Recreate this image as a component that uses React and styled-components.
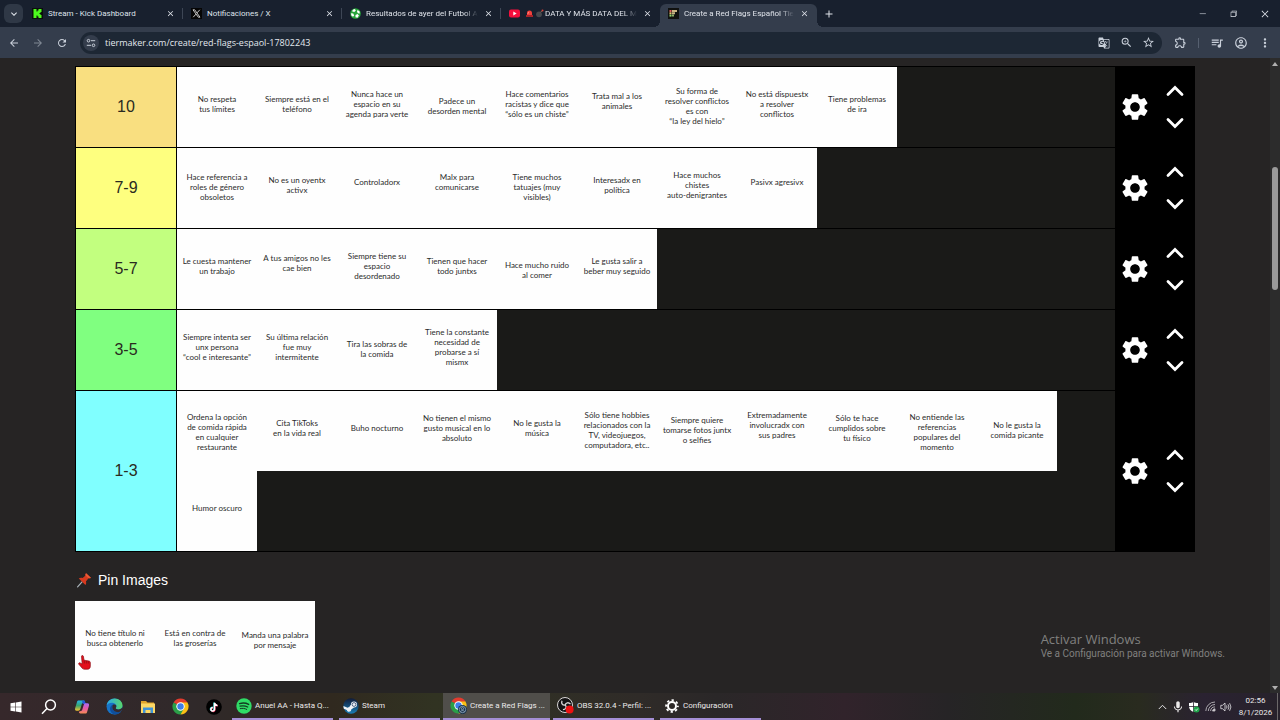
import styled, { createGlobalStyle, css } from "styled-components";
import {
  MdSettings,
  MdKeyboardArrowDown,
  MdArrowBack,
  MdArrowForward,
  MdRefresh,
  MdClose,
  MdAdd,
  MdGTranslate,
  MdZoomIn,
  MdStarBorder,
  MdOutlineExtension,
  MdQueueMusic,
  MdOutlineAccountCircle,
  MdMoreVert,
  MdMic,
} from "react-icons/md";
import { VscChromeMinimize, VscChromeRestore, VscChromeClose } from "react-icons/vsc";

const GlobalStyle = createGlobalStyle`
  * {
    box-sizing: border-box;
  }
  body {
    margin: 0;
    background: #262424;
  }
  button {
    display: flex;
    align-items: center;
    justify-content: center;
    padding: 0;
    border: 0;
    background: none;
    color: inherit;
    font: inherit;
  }
  svg {
    display: block;
    flex-shrink: 0;
  }
`;

const Screen = styled.div`
  display: flex;
  flex-direction: column;
  height: 100vh;
  color: #dfe3ea;
  font-family: Roboto, "Open Sans", sans-serif;
  font-size: 8px;
`;

/* browser window */

const TabStrip = styled.header`
  display: flex;
  height: 27px;
  flex-shrink: 0;
  background: #18202e;
`;

const TabSearch = styled.button`
  width: 19px;
  height: 19px;
  margin: 4px 1px 0 4px;
  border-radius: 6px;
  background: #2f3846 !important;
`;

const Tab = styled.div`
  position: relative;
  display: flex;
  align-items: center;
  gap: 5px;
  flex: 0 1 159px;
  min-width: 0;
  height: 19px;
  margin-top: 4px;
  padding: 0 8px;

  ${(props) =>
    props.$divider &&
    css`
      &::after {
        content: "";
        position: absolute;
        right: 0;
        width: 1px;
        height: 11px;
        background: #3d4655;
      }
    `}

  ${(props) =>
    props.$active &&
    css`
      flex-basis: 157px;
      height: 23px;
      padding-bottom: 4px;
      border-radius: 6px 6px 0 0;
      background: #343d4c;

      &::before,
      &::after {
        content: "";
        position: absolute;
        bottom: 0;
        width: 6px;
        height: 6px;
      }
      &::before {
        right: 100%;
        background: radial-gradient(circle at 0 0, transparent 6px, #343d4c 6px);
      }
      &::after {
        left: 100%;
        background: radial-gradient(circle at 100% 0, transparent 6px, #343d4c 6px);
      }
    `}
`;

const TabTitle = styled.span`
  display: flex;
  align-items: center;
  gap: 1px;
  flex: 1;
  min-width: 0;
  white-space: nowrap;
  line-height: 12px;
  mask-image: ${(props) => (props.$fade ? "linear-gradient(to right, #000 88%, transparent)" : "none")};
`;

const TabClose = styled.button`
  width: 10px;
  height: 10px;
`;

const NewTab = styled.button`
  width: 24px;
  height: 19px;
  margin-top: 4px;
`;

const WindowControls = styled.div`
  display: flex;
  margin-left: auto;

  button {
    width: 31px;
    height: 27px;
  }
`;

const Toolbar = styled.nav`
  display: flex;
  align-items: center;
  height: 31px;
  flex-shrink: 0;
  padding: 0 3px 0 2px;
  background: #343d4c;
  color: #c9d0da;
`;

const ToolButton = styled.button`
  width: 24px;
  height: 22px;
  opacity: ${(props) => (props.$dim ? 0.5 : 1)};
`;

const AddressBar = styled.div`
  display: flex;
  align-items: center;
  flex: 1;
  height: 22px;
  margin: 0 6px;
  padding: 0 3px;
  border-radius: 11px;
  background: #1d2734;

  button {
    width: 22px;
    height: 16px;
  }
`;

const SiteInfo = styled.button`
  border-radius: 8px;
  background: #343d4c !important;
  width: 16px !important;
`;

const Address = styled.input`
  flex: 1;
  min-width: 0;
  padding: 0 0 0 6px;
  border: 0;
  background: none;
  color: #e3e7ee;
  font: 9px/16px "Open Sans", "Noto Sans", sans-serif;
`;

const Divider = styled.span`
  width: 1px;
  height: 10px;
  margin: 0 6px;
  background: #566070;
`;

/* tier list page */

const Viewport = styled.div`
  position: relative;
  display: flex;
  flex: 1;
  min-height: 0;
  overflow: hidden;
  background: #262424;
`;

const Page = styled.main`
  flex: 1;
  min-width: 0;
  padding: 8px 75px 0;
`;

const TierList = styled.div`
  border: solid #000;
  border-width: 1px 0 0 1px;
  background: #000;
`;

const TierRow = styled.section`
  display: grid;
  grid-template-columns: 101px 1fr 80px;
  border-bottom: 1px solid #000;
`;

const TierLabel = styled.h2`
  display: flex;
  align-items: center;
  justify-content: center;
  margin: 0;
  border-right: 1px solid #000;
  background: ${(props) => props.$color};
  color: #2a2a20;
  font: 16px/20px "Liberation Sans", Arial, sans-serif;
`;

const TierItems = styled.ul`
  display: flex;
  flex-wrap: wrap;
  align-content: flex-start;
  margin: 0;
  padding: 0;
  background: #1a1a18;
  list-style: none;
`;

const cardPadding = {
  high: "0 0 12px",
  normal: "0 0 7px",
  middle: "0 0 2px",
  low: "2px 0 0",
};

const Card = styled.li`
  display: flex;
  align-items: center;
  justify-content: center;
  width: 80px;
  height: 80px;
  padding: ${(props) => cardPadding[props.$place || "normal"]};
  background: #fefefe;
  color: #2b2b2b;
  font: 8px/10px Lato, sans-serif;
  text-align: center;
  white-space: pre;
`;

const TierControls = styled.div`
  display: grid;
  grid-template-columns: 1fr 1fr;
  align-items: center;
  background: #000;
  color: #fff;
`;

const MoveButtons = styled.div`
  display: flex;
  flex-direction: column;
  align-items: center;

  button {
    width: 32px;
    height: 32px;
  }
`;

const PinTitle = styled.h3`
  display: flex;
  align-items: center;
  gap: 6px;
  margin: 17px 0 10px 1px;
  color: #fff;
  font: 14px/22px "Liberation Sans", Arial, sans-serif;
`;

const PinnedItems = styled.ul`
  display: flex;
  position: relative;
  width: max-content;
  margin: 0;
  padding: 0;
  list-style: none;
`;

const Cursor = styled.svg`
  position: absolute;
  left: 3px;
  bottom: 11px;
`;

const Scrollbar = styled.div`
  display: flex;
  flex-direction: column;
  align-items: center;
  width: 10px;
  padding: 4px 0 3px;
  background: #2c2c2c;
`;

const ScrollThumb = styled.div`
  width: 6px;
  height: 123px;
  margin: 101px 0 auto;
  border-radius: 3px;
  background: #9b9b9b;
`;

const Watermark = styled.div`
  position: absolute;
  right: 55px;
  bottom: 32px;
  color: #80807f;
  font-size: 10px;
  line-height: 14px;
`;

const WatermarkTitle = styled.div`
  font-family: "Open Sans", "Noto Sans", sans-serif;
  font-size: 13px;
  line-height: 16px;
`;

/* windows taskbar */

const Taskbar = styled.footer`
  display: flex;
  height: 27px;
  flex-shrink: 0;
  background: linear-gradient(
    to right,
    #36282b 0%,
    #30292a 15%,
    #30291f 26%,
    #313322 34%,
    #2f2b28 50%,
    #2a2728 56%,
    #31232b 66%,
    #262426 74%,
    #222a1c 84%,
    #292b1f 89%,
    #2a2231 94%,
    #27222b 100%
  );
  color: #eceaea;
`;

const Pinned = styled.button`
  width: 33px;
  height: 27px;
  padding-right: 2px !important;
`;

const TaskbarApps = styled.div`
  display: flex;
  flex: 1;
  min-width: 0;
  margin-left: -2px;
`;

const TaskbarApp = styled.button`
  flex: 0 1 ${(props) => (props.$active ? "107px" : "101px")};
  justify-content: flex-start !important;
  gap: 3px;
  min-width: 0;
  height: 27px;
  margin: 0 ${(props) => (props.$active ? "0" : "3px")};
  padding: 0 0 0 ${(props) => (props.$active ? "7px" : "4px")} !important;
  border-bottom: 2px solid #a58fd6 !important;
  background: ${(props) => (props.$active ? "#504e4a" : "transparent")} !important;
  white-space: nowrap;
`;

const Tray = styled.div`
  display: flex;
  align-items: center;

  button {
    width: 16px;
    height: 27px;
  }
`;

const Clock = styled.time`
  width: 43px;
  text-align: center;
  line-height: 12px;
`;

const ShowDesktop = styled.button`
  width: 3px !important;
  border-left: 1px solid #6b6869 !important;
`;

const tiers = [
  {
    name: "10",
    color: "#f9df80",
    items: [
      ["No respeta\ntus límites"],
      ["Siempre está en el\nteléfono"],
      ["Nunca hace un\nespacio en su\nagenda para verte"],
      ["Padece un\ndesorden mental", "middle"],
      ["Hace comentarios\nracistas y dice que\n“sólo es un chiste”"],
      ["Trata mal a los\nanimales", "high"],
      ["Su forma de\nresolver conflictos\nes con\n“la ley del hielo”", "middle"],
      ["No está dispuestx\na resolver\nconflictos"],
      ["Tiene problemas\nde ira"],
    ],
  },
  {
    name: "7-9",
    color: "#feff7f",
    items: [
      ["Hace referencia a\nroles de género\nobsoletos", "middle"],
      ["No es un oyentx\nactivx"],
      ["Controladorx", "high"],
      ["Malx para\ncomunicarse", "high"],
      ["Tiene muchos\ntatuajes (muy\nvisibles)", "middle"],
      ["Interesadx en\npolítica"],
      ["Hace muchos\nchistes\nauto-denigrantes"],
      ["Pasivx agresivx", "high"],
    ],
  },
  {
    name: "5-7",
    color: "#c2ff7f",
    items: [
      ["Le cuesta mantener\nun trabajo"],
      ["A tus amigos no les\ncae bien", "high"],
      ["Siempre tiene su\nespacio\ndesordenado"],
      ["Tienen que hacer\ntodo juntxs"],
      ["Hace mucho ruido\nal comer", "low"],
      ["Le gusta salir a\nbeber muy seguido"],
    ],
  },
  {
    name: "3-5",
    color: "#80ff80",
    items: [
      ["Siempre intenta ser\nunx persona\n“cool e interesante”"],
      ["Su última relación\nfue muy\nintermitente"],
      ["Tira las sobras de\nla comida", "middle"],
      ["Tiene la constante\nnecesidad de\nprobarse a sí\nmismx"],
    ],
  },
  {
    name: "1-3",
    color: "#80ffff",
    items: [
      ["Ordena la opción\nde comida rápida\nen cualquier\nrestaurante", "low"],
      ["Cita TikToks\nen la vida real"],
      ["Buho nocturno"],
      ["No tienen el mismo\ngusto musical en lo\nabsoluto"],
      ["No le gusta la\nmúsica"],
      ["Sólo tiene hobbies\nrelacionados con la\nTV, videojuegos,\ncomputadora, etc..", "middle"],
      ["Siempre quiere\ntomarse fotos juntx\no selfies", "middle"],
      ["Extremadamente\ninvolucradx con\nsus padres", "high"],
      ["Sólo te hace\ncumplidos sobre\ntu físico"],
      ["No entiende las\nreferencias\npopulares del\nmomento", "low"],
      ["No le gusta la\ncomida picante", "middle"],
      ["Humor oscuro"],
    ],
  },
];

const pins = [
  ["No tiene título ni\nbusca obtenerlo"],
  ["Está en contra de\nlas groserías"],
  ["Manda una palabra\npor mensaje", "middle"],
];

const KickIcon = () => (
  <svg width="11" height="11" viewBox="0 0 11 11">
    <rect width="11" height="11" fill="#0b0f0b" />
    <path d="M1.500 1h3v2.500h1V2.500h1V1h3v3h-1v1h-1v1h1v1h1v3h-3V8.500h-1v-1h-1V10h-3z" fill="#4dfa1e" />
  </svg>
);

const XIcon = () => (
  <svg width="11" height="11" viewBox="0 0 11 11" fill="none">
    <rect width="11" height="11" fill="#050505" />
    <path d="M2 1.800h1.700L9 9.200H7.300zM8.800 1.800 6 4.900M5 6.100 2.200 9.200" stroke="#d8d8d8" strokeWidth=".9" />
  </svg>
);

const BallIcon = () => (
  <svg width="11" height="11" viewBox="0 0 11 11">
    <circle cx="5.500" cy="5.500" r="5.300" fill="#27a53a" />
    <path
      d="M3.200 1.500 5 1l.8 1.800L4.200 4 2 3.300zM7.500 2l2 1.300.3 2.200-2-.3L7 3.500zM1 5.200l2.200.2 1 2L3 8.800 1.300 7.500zM5.500 7l2-1 1.400 1.500L7.500 9.700l-2-.4z"
      fill="#fff"
    />
  </svg>
);

const YoutubeIcon = () => (
  <svg width="11" height="11" viewBox="0 0 11 11">
    <rect y="1.500" width="11" height="8" rx="2" fill="#f50e3c" />
    <path d="M4.300 3.500v4L7.600 5.500z" fill="#fff" />
  </svg>
);

const TierMakerIcon = () => (
  <svg width="11" height="11" viewBox="0 0 11 11">
    <rect width="11" height="11" fill="#10110f" />
    <path d="M1.500 2h2v2h-2z" fill="#e0605c" />
    <path d="M1.500 4.300h2v2h-2z" fill="#e8c070" />
    <path d="M1.500 6.600h2v2h-2z" fill="#8fd66c" />
    <path d="M4 2h5v2H4zM4 4.300h3v2H4z" fill="#c9b482" />
    <path d="M4 6.600h2v2H4z" fill="#8fae6c" />
  </svg>
);

const SirenIcon = () => (
  <svg width="9" height="9" viewBox="0 0 9 9">
    <path d="M2 6V4a2.500 2.500 0 0 1 5 0v2z" fill="#f3403c" />
    <path d="M1 6h7v2H1z" fill="#a9242a" />
    <path d="M3 5V4l1-1" stroke="#ffb0a8" strokeWidth=".6" fill="none" />
  </svg>
);

const BombIcon = () => (
  <svg width="9" height="9" viewBox="0 0 9 9">
    <circle cx="4" cy="5.300" r="2.900" fill="#46494e" />
    <path d="M5.500 3.300 7 1.800" stroke="#8b6a58" />
    <circle cx="7.500" cy="1.500" r="1" fill="#d8413a" />
  </svg>
);

const SiteInfoIcon = () => (
  <svg width="10" height="10" viewBox="0 0 10 10" fill="none" stroke="currentColor">
    <circle cx="2.500" cy="2.700" r="1.300" />
    <path d="M5 2.700h4.200M.8 7.300H5" />
    <circle cx="7.500" cy="7.300" r="1.300" />
  </svg>
);

const Chevron = ({ down }) => (
  <svg width="18" height="12" viewBox="0 0 18 12" fill="none" stroke="#fff" strokeWidth="2.800" strokeLinecap="round">
    <path d={down ? "M2 2.500 9 9.500l7-7" : "M2 9.500l7-7 7 7"} />
  </svg>
);

const PushpinIcon = () => (
  <svg width="16" height="16" viewBox="0 0 16 16">
    <path d="M6.300 9.700 1.600 14.800" stroke="#aab4ba" strokeWidth="1.200" strokeLinecap="round" />
    <path d="M2.800 6.400c1.200-.9 2.700-.8 3.800-.4l3-2.500c-.3-.8-.2-1.700.5-2.300l4.800 4.600c-.7.600-1.600.7-2.400.4l-2.600 3.200c.5 1.300.4 2.600-.5 3.700z" fill="#d63a1f" />
    <path d="m10.100 1.200 4.800 4.600c-.7.600-1.600.7-2.400.4L9.600 3.500c-.3-.8-.2-1.700.5-2.300z" fill="#ec5a35" />
  </svg>
);

const TierRowView = ({ tier }) => (
  <TierRow>
    <TierLabel $color={tier.color}>{tier.name}</TierLabel>
    <TierItems>
      {tier.items.map(([text, place]) => (
        <Card key={text} $place={place}>
          {text}
        </Card>
      ))}
    </TierItems>
    <TierControls>
      <button aria-label={`Settings ${tier.name}`}>
        <MdSettings size={32} />
      </button>
      <MoveButtons>
        <button aria-label="Move up">
          <Chevron />
        </button>
        <button aria-label="Move down">
          <Chevron down />
        </button>
      </MoveButtons>
    </TierControls>
  </TierRow>
);

const StartIcon = () => (
  <svg width="12" height="12" viewBox="0 0 12 12" fill="#fff">
    <path d="M.5 2.200 5.300 1.500v4.200H.5zM5.900 1.400 11.500.6v5.100H5.900zM.5 6.300h4.800v4.200L.5 9.800zM5.900 6.300h5.600v5.100l-5.600-.8z" />
  </svg>
);

const SearchIcon = () => (
  <svg width="16" height="16" viewBox="0 0 16 16" fill="none" stroke="#fff" strokeWidth="1.500">
    <circle cx="9.500" cy="6" r="4.900" />
    <path d="M6 9.600 1 14.800" />
  </svg>
);

const CopilotIcon = () => (
  <svg width="16" height="16" viewBox="0 0 16 16">
    <defs>
      <linearGradient id="copA" x1="0" y1="0" x2="0" y2="1">
        <stop offset="0" stopColor="#25b5e8" />
        <stop offset=".5" stopColor="#3aa46c" />
        <stop offset="1" stopColor="#f2c230" />
      </linearGradient>
      <linearGradient id="copB" x1="0" y1="0" x2="0" y2="1">
        <stop offset="0" stopColor="#a96cf0" />
        <stop offset=".5" stopColor="#e85aa6" />
        <stop offset="1" stopColor="#f58b52" />
      </linearGradient>
    </defs>
    <path d="M4.500 1.500h5c1 0 1.300.6 1.600 1.500L8 4.500 6.300 10c-.4 1.300-1 1.700-2 1.700H2.600C1 11.700.8 10.500 1.200 9L3 3c.3-1 .7-1.500 1.500-1.500z" fill="url(#copA)" />
    <path d="M9.500 1.500c1 0 1.300.6 1.700 1.700L12 5 9 5 8 2.500z" fill="#2456d8" />
    <path d="M11.600 4.300h1.900c1.500 0 1.800 1.200 1.400 2.700l-1.800 6c-.3 1-.8 1.500-1.700 1.500h-5c-1 0-1.300-.7-1.600-1.700L8 11.500 9.700 6c.4-1.200.9-1.700 1.900-1.700z" fill="url(#copB)" />
  </svg>
);

const EdgeIcon = () => (
  <svg width="17" height="17" viewBox="0 0 17 17">
    <defs>
      <linearGradient id="edgeTop" x1="0" y1="0" x2="1" y2="0">
        <stop offset="0" stopColor="#2aa8e8" />
        <stop offset="1" stopColor="#58d66b" />
      </linearGradient>
    </defs>
    <circle cx="8.500" cy="8.500" r="8" fill="#1673c8" />
    <path d="M.6 7.500C1.200 3.500 4.500.5 8.500.5c4.700 0 8 3.300 8 6.900 0 2.400-1.900 4-4.100 4-1.600 0-2.600-.5-2.600-1.100 0-.5.600-.9.600-2C10.400 6.200 8.400 4.700 6 4.700 3.400 4.700 1.300 6 .6 7.500z" fill="url(#edgeTop)" />
    <path d="M6.300 9c0 3.200 2.700 5.200 5.700 5.200 1.300 0 2.500-.4 3.300-.9-1.500 2.200-4 3.200-6.500 3.200-3-.4-4.800-3-4.800-5.500 0-2 1.200-3.800 3-4.400C6.500 7.200 6.300 8.200 6.300 9z" fill="#0f4f9e" />
    <path d="M10.300 7.500c.3 1.100-.5 1.900-.5 2.700 0 .7 1 1.200 2.600 1.200 1.400 0 2.700-.5 3.400-1.700l.4 1.700-1.400 1.900c-1 .6-1.800.9-2.800.9-3 0-5.700-2-5.700-5.200 0-1 .3-1.900.8-2.400 1.500-.5 2.800 0 3.200.9z" fill="#342b30" />
  </svg>
);

const FolderIcon = () => (
  <svg width="16" height="16" viewBox="0 0 16 16">
    <path d="M1 2h5l1.500 1.500H14V7H1z" fill="#e0a52c" />
    <path d="M1 4.500h14V14H1z" fill="#fbd765" />
    <path d="M3 8.500h10V14h-2.500v-3h-5v3H3z" fill="#3f93d8" />
  </svg>
);

const ChromeIcon = ({ badge }) => (
  <svg width="17" height="17" viewBox="0 0 17 17">
    <path d="M8.500 8.500 1.570 4.500A8 8 0 0 1 15.430 4.500z" fill="#e33b2e" />
    <path d="M8.500 8.500 15.430 4.500A8 8 0 0 1 8.500 16.500z" fill="#fbc116" />
    <path d="M8.500 8.500 8.500 16.500A8 8 0 0 1 1.570 4.500z" fill="#2b9f48" />
    <path d="M8.500 4.500h6.930L11.960 10.500z" fill="#fbc116" />
    <path d="M11.960 10.500 8.500 16.500 5.040 10.500z" fill="#2b9f48" />
    <circle cx="8.500" cy="8.500" r="4.200" fill="#fff" />
    <circle cx="8.500" cy="8.500" r="3.200" fill="#3f7fe8" />
    {badge && (
      <g>
        <circle cx="12.500" cy="12.500" r="4.500" fill="#17324c" />
        <circle cx="12.500" cy="12.500" r="3.200" fill="none" stroke="#a9bfd2" strokeWidth=".7" />
        <circle cx="12.500" cy="11.700" r="1.100" fill="none" stroke="#a9bfd2" strokeWidth=".7" />
        <path d="M10.500 14.500c1-1.200 3-1.200 4 0" fill="none" stroke="#a9bfd2" strokeWidth=".7" />
      </g>
    )}
  </svg>
);

const TiktokIcon = () => (
  <svg width="16" height="16" viewBox="0 0 16 16" fill="none" strokeWidth="1.500">
    <circle cx="8" cy="8" r="7.800" fill="#000" />
    <path d="M8.100 3.500v6.600a1.800 1.800 0 1 1-1.700-1.800M8.100 3.800c.3 1.500 1.300 2.300 2.900 2.400" stroke="#27e5e0" />
    <path d="M8.900 4v6.600a1.800 1.800 0 1 1-1.700-1.800M8.900 4.300c.3 1.500 1.300 2.300 2.900 2.400" stroke="#f4305a" />
    <path d="M8.500 3.700v6.600a1.800 1.800 0 1 1-1.700-1.800M8.500 4c.3 1.500 1.300 2.300 2.900 2.400" stroke="#fff" />
  </svg>
);

const SpotifyIcon = () => (
  <svg width="16" height="16" viewBox="0 0 16 16" fill="none" stroke="#123c20" strokeLinecap="round">
    <circle cx="8" cy="8" r="7.700" fill="#2fdc66" stroke="none" />
    <path d="M3.600 5.600c3-.9 6.500-.6 9 .8" strokeWidth="1.500" />
    <path d="M4 8.200c2.700-.7 5.400-.4 7.700.8" strokeWidth="1.200" />
    <path d="M4.300 10.600c2.300-.5 4.500-.3 6.400.8" strokeWidth="1" />
  </svg>
);

const SteamIcon = () => (
  <svg width="16" height="16" viewBox="0 0 16 16">
    <defs>
      <linearGradient id="steam" x1="0" y1="0" x2="0" y2="1">
        <stop offset="0" stopColor="#101b38" />
        <stop offset="1" stopColor="#1a7db5" />
      </linearGradient>
    </defs>
    <circle cx="8" cy="8" r="7.700" fill="url(#steam)" />
    <path d="m.4 8 4.200 1.700c.4-.3 1-.4 1.500-.4L8 6.600a3 3 0 1 1 3 2.900l-2.800 2c0 1.300-1 2.300-2.200 2.300-1.100 0-2-.8-2.200-1.800L.9 10.700C.6 9.900.4 9 .4 8z" fill="#eef2f6" />
    <circle cx="11" cy="6.500" r="1.900" fill="#eef2f6" stroke="#15305a" strokeWidth=".7" />
  </svg>
);

const ObsIcon = () => (
  <svg width="17" height="17" viewBox="0 0 17 17">
    <circle cx="8" cy="8" r="7.500" fill="#141314" stroke="#d8d6d6" />
    <g fill="none" stroke="#d8d6d6" strokeWidth="1.300">
      <path d="M8.200 8c-2.700.6-4.200-1.500-3.200-4.300" />
      <path d="M8.200 8c.7-2.600 3.400-3 5.300-.8" />
      <path d="M8.200 8c2 2 .6 4.400-2.300 4.700" />
    </g>
    <circle cx="12.600" cy="12.600" r="4" fill="#ee1111" />
  </svg>
);

const CogIcon = () => (
  <svg width="16" height="14" viewBox="-1 0 16 14" fill="none" stroke="#fff">
    <circle cx="7" cy="7" r="4" strokeWidth="2" />
    <circle cx="7" cy="7" r="5.900" strokeWidth="1.800" strokeDasharray="2.300 2.333" strokeDashoffset="1.150" />
  </svg>
);

const ShieldIcon = () => (
  <svg width="12" height="12" viewBox="0 0 12 12">
    <path d="M5.500.8c1.400 1 2.700 1.300 4.500 1.300v3c0 3-1.600 4.900-4.500 6C2.600 10 1 8.100 1 5.100v-3C2.800 2.100 4.100 1.800 5.500.8z" fill="#fff" />
    <path d="M5.500 1v10M1 5.500h9" stroke="#2b2430" strokeWidth=".8" />
    <circle cx="8.500" cy="8.500" r="3" fill="#1fa34a" />
    <path d="m7.200 8.500 1 1 1.600-1.900" fill="none" stroke="#fff" strokeWidth=".8" />
  </svg>
);

const WifiIcon = () => (
  <svg width="11" height="11" viewBox="0 0 11 11" fill="none" stroke="#b9b7bb" strokeWidth=".9">
    <path d="M.8 10A9.200 9.200 0 0 1 10 1M3.300 10A6.700 6.700 0 0 1 10 3.500M5.600 10A4.400 4.400 0 0 1 10 5.900" />
    <path d="M7.500 10A2.500 2.500 0 0 1 10 7.800V10z" fill="#e6e4e8" />
  </svg>
);

const VolumeIcon = () => (
  <svg width="12" height="12" viewBox="0 0 12 12" fill="none" stroke="#e6e4e8" strokeWidth=".8">
    <path d="M.8 4.300h1.700L5 2v8L2.500 7.700H.8z" />
    <path d="M6.500 4.500q1 1.500 0 3M8 3.300q1.900 2.700 0 5.400M9.600 2.200q2.700 3.800 0 7.600" />
  </svg>
);

const tabs = [
  { icon: <KickIcon />, title: "Stream - Kick Dashboard", divider: true },
  { icon: <XIcon />, title: "Notificaciones / X", divider: true },
  { icon: <BallIcon />, title: "Resultados de ayer del Futbol A", divider: true, fade: true },
  {
    icon: <YoutubeIcon />,
    title: (
      <>
        <SirenIcon />
        <BombIcon />
        DATA Y MÁS DATA DEL M
      </>
    ),
    fade: true,
  },
  { icon: <TierMakerIcon />, title: "Create a Red Flags Español Tier", active: true, fade: true },
];

const apps = [
  { icon: <SpotifyIcon />, title: "Anuel AA - Hasta Q..." },
  { icon: <SteamIcon />, title: "Steam" },
  { icon: <ChromeIcon badge />, title: "Create a Red Flags ...", active: true },
  { icon: <ObsIcon />, title: "OBS 32.0.4 - Perfil: ..." },
  { icon: <CogIcon />, title: "Configuración" },
];

function App() {
  return (
    <Screen>
      <GlobalStyle />
      <TabStrip>
        <TabSearch aria-label="Search tabs">
          <MdKeyboardArrowDown size={12} />
        </TabSearch>
        {tabs.map((tab, i) => (
          <Tab key={i} $active={tab.active} $divider={tab.divider}>
            {tab.icon}
            <TabTitle $fade={tab.fade}>{tab.title}</TabTitle>
            <TabClose aria-label="Close tab">
              <MdClose size={9} />
            </TabClose>
          </Tab>
        ))}
        <NewTab aria-label="New tab">
          <MdAdd size={12} />
        </NewTab>
        <WindowControls>
          <button aria-label="Minimize">
            <VscChromeMinimize size={9} />
          </button>
          <button aria-label="Restore">
            <VscChromeRestore size={9} />
          </button>
          <button aria-label="Close">
            <VscChromeClose size={10} />
          </button>
        </WindowControls>
      </TabStrip>

      <Toolbar>
        <ToolButton aria-label="Back">
          <MdArrowBack size={12} />
        </ToolButton>
        <ToolButton aria-label="Forward" $dim>
          <MdArrowForward size={12} />
        </ToolButton>
        <ToolButton aria-label="Reload">
          <MdRefresh size={12} />
        </ToolButton>
        <AddressBar>
          <SiteInfo aria-label="Site information">
            <SiteInfoIcon />
          </SiteInfo>
          <Address aria-label="Address" defaultValue="tiermaker.com/create/red-flags-espaol-17802243" />
          <button aria-label="Translate">
            <MdGTranslate size={12} />
          </button>
          <button aria-label="Zoom">
            <MdZoomIn size={13} />
          </button>
          <button aria-label="Bookmark">
            <MdStarBorder size={13} />
          </button>
        </AddressBar>
        <ToolButton aria-label="Extensions">
          <MdOutlineExtension size={13} />
        </ToolButton>
        <Divider />
        <ToolButton aria-label="Media">
          <MdQueueMusic size={14} />
        </ToolButton>
        <ToolButton aria-label="Profile">
          <MdOutlineAccountCircle size={14} />
        </ToolButton>
        <ToolButton aria-label="Menu">
          <MdMoreVert size={14} />
        </ToolButton>
      </Toolbar>

      <Viewport>
        <Page>
          <TierList>
            {tiers.map((tier) => (
              <TierRowView key={tier.name} tier={tier} />
            ))}
          </TierList>
          <PinTitle>
            <PushpinIcon />
            Pin Images
          </PinTitle>
          <PinnedItems>
            {pins.map(([text, place]) => (
              <Card key={text} $place={place}>
                {text}
              </Card>
            ))}
            <Cursor width="13" height="15" viewBox="0 0 13 15" aria-hidden="true">
              <path
                d="M3.500 1.300c0-1 1.700-1 1.900 0L6 5.200l4.800.8c1 .2 1.500.8 1.500 1.700v3.500c0 1.700-1 3-2.600 3H6.300c-1 0-1.600-.4-2.200-1.200L.8 9.200c-.6-.9.500-1.700 1.400-1.200l2 1z"
                fill="#e3101c"
                stroke="#8d0c14"
                strokeWidth=".7"
              />
              <path d="M6.300 5.500v3M8.300 6v2.500M10.300 6.200v2.300" stroke="#8d0c14" strokeWidth=".8" />
            </Cursor>
          </PinnedItems>
        </Page>
        <Scrollbar>
          <svg width="6" height="4" viewBox="0 0 6 4">
            <path d="M0 4 3 0l3 4z" fill="#b0b0b0" />
          </svg>
          <ScrollThumb />
          <svg width="6" height="4" viewBox="0 0 6 4">
            <path d="M0 0h6L3 4z" fill="#b0b0b0" />
          </svg>
        </Scrollbar>
        <Watermark>
          <WatermarkTitle>Activar Windows</WatermarkTitle>
          Ve a Configuración para activar Windows.
        </Watermark>
      </Viewport>

      <Taskbar>
        <Pinned aria-label="Start">
          <StartIcon />
        </Pinned>
        <Pinned aria-label="Search">
          <SearchIcon />
        </Pinned>
        <Pinned aria-label="Copilot">
          <CopilotIcon />
        </Pinned>
        <Pinned aria-label="Edge">
          <EdgeIcon />
        </Pinned>
        <Pinned aria-label="File Explorer">
          <FolderIcon />
        </Pinned>
        <Pinned aria-label="Chrome">
          <ChromeIcon />
        </Pinned>
        <Pinned aria-label="TikTok">
          <TiktokIcon />
        </Pinned>
        <TaskbarApps>
          {apps.map((app) => (
            <TaskbarApp key={app.title} $active={app.active}>
              {app.icon}
              {app.title}
            </TaskbarApp>
          ))}
        </TaskbarApps>
        <Tray>
          <button aria-label="Show hidden icons">
            <svg width="9" height="6" viewBox="0 0 9 6" fill="none" stroke="#e6e4e8">
              <path d="m.8 5 3.700-3.700L8.200 5" />
            </svg>
          </button>
          <button aria-label="Microphone">
            <MdMic size={14} />
          </button>
          <button aria-label="Security">
            <ShieldIcon />
          </button>
          <button aria-label="Network">
            <WifiIcon />
          </button>
          <button aria-label="Volume">
            <VolumeIcon />
          </button>
          <Clock>
            02:56
            <br />
            8/1/2026
          </Clock>
          <ShowDesktop aria-label="Show desktop" />
        </Tray>
      </Taskbar>
    </Screen>
  );
}

export default App;
